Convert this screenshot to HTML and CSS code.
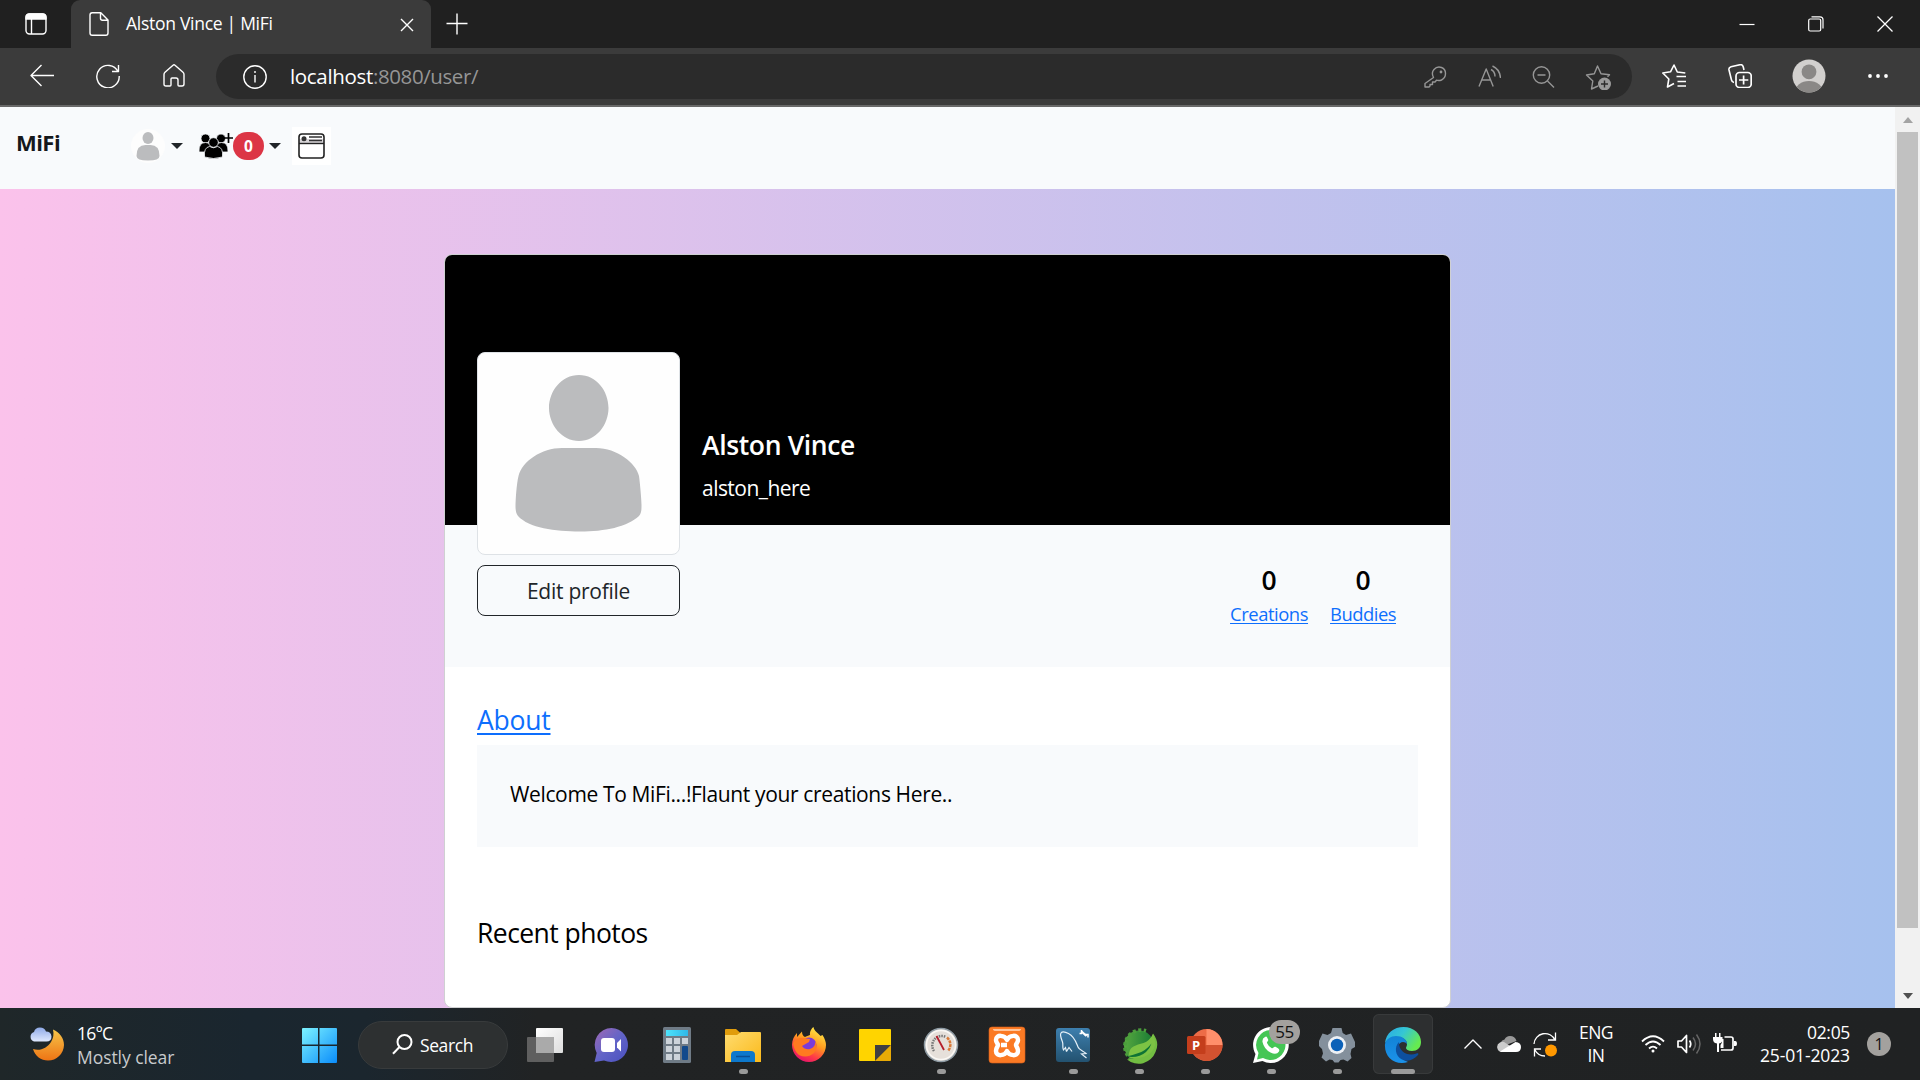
FILE: index.html
```html
<!DOCTYPE html>
<html lang="en">
<head>
<meta charset="utf-8">
<title>Alston Vince | MiFi</title>
<link rel="stylesheet" href="styles.css">
</head>
<body>
<div class="screen">

<header class="titlebar">
  <svg class="tab-actions line" width="24" height="24" viewBox="0 0 24 24"><rect x="2" y="2" width="20" height="20" rx="3.5"/><path d="M2 7V5.500Q2 2 5.500 2h13Q22 2 22 5.500V7z" fill="#fff"/><path d="M7.500 7v15"/></svg>
  <div class="tab">
    <svg class="line" width="20" height="24" viewBox="0 0 20 24"><path d="M1 3Q1 .8 3.200.8h8.600L19 8v13q0 2.200-2.200 2.200H3.200Q1 23.200 1 21zM11.500 1v5.200q0 2 2 2H19" stroke-width="1.400"/></svg>
    <span class="tab-title">Alston Vince | MiFi</span>
    <svg class="line tab-close" width="14" height="14" viewBox="0 0 14 14"><path d="M1 1l12 12M13 1L1 13"/></svg>
  </div>
  <svg class="line new-tab" width="22" height="22" viewBox="0 0 22 22"><path d="M11 .5v21M.5 10.500h21"/></svg>
  <div class="window-controls">
    <svg class="line" width="16" height="16" viewBox="0 0 16 16"><path d="M.5 8.500h15" stroke-width="1.200"/></svg>
    <svg class="line" width="16" height="16" viewBox="0 0 16 16"><rect x=".7" y="3" width="12" height="12" rx="1.500" stroke-width="1.200"/><path d="M3.500.8H12Q15 .8 15 3.800V12.500" stroke-width="1.200"/></svg>
    <svg class="line" width="16" height="16" viewBox="0 0 16 16"><path d="M.5.500l15 15M15.500.500l-15 15" stroke-width="1.300"/></svg>
  </div>
</header>

<nav class="toolbar">
  <svg class="line" width="24" height="24" viewBox="0 0 24 24"><path d="M24 11.500H1M11.500 1L1 11.500 11.500 22"/></svg>
  <svg class="line" width="24" height="24" viewBox="0 0 24 24"><path d="M22 7.500A11.200 11.200 0 1 0 23.200 12M22.500 1v6.500H16"/></svg>
  <svg class="line" width="24" height="24" viewBox="0 0 24 24"><path d="M2 10.500q0-1.300 1-2.200L11 1.200q1-.8 2 0l8 7.100q1 .9 1 2.200V20q0 2-2 2h-3q-1 0-1-1v-5q0-2-2-2h-4q-1 0-1 1v6q0 1-1 1H4q-2 0-2-2z"/></svg>
  <div class="address">
    <svg class="line" width="24" height="24" viewBox="0 0 24 24"><circle cx="12" cy="12" r="11.200"/><path d="M12 10v7.500M12 6v2"/></svg>
    <span class="url"><span class="url-host">localhost</span>:8080/user/</span>
    <div class="address-icons">
      <svg class="line dim" width="24" height="24" viewBox="0 0 24 24"><path d="M10.500 12.500q-2.500-4.500.5-8 3-3.500 7.500-2 4 1.500 4 6t-4 6.500q-2.500 1-5 .2L12 17H9.500v2.500H7V21l-1 1H2v-3.500z"/><circle cx="18" cy="7" r=".7"/></svg>
      <svg class="line dim" width="24" height="24" viewBox="0 0 24 24"><path d="M2 21.500L9.200 4l7 17.500M4.800 15h9M14 4.500q4 2 4 7M15.500 1q7.500 3.500 8 12"/></svg>
      <svg class="line dim" width="24" height="24" viewBox="0 0 24 24"><circle cx="10.500" cy="10" r="8.200"/><path d="M16.500 16l6.500 6.500M6.500 10h8"/></svg>
      <svg class="line dim" width="27" height="26" viewBox="0 0 27 26"><path d="M13 22l-6.500 3 1.300-8L1.500 11l7.800-1.200L12.500 2l3.500 7.800 8.500 1-2 2"/><circle cx="19.500" cy="20" r="6.500" fill="#9a9a9a" stroke="none"/><path d="M19.500 16.500v7M16 20h7" stroke="#2b2b2b"/></svg>
    </div>
  </div>
  <div class="toolbar-icons">
    <svg class="line" width="24" height="24" viewBox="0 0 24 24"><path d="M12 19.500L5.500 23l1.300-8L.8 9l7.700-1.200L12 1l3.300 7 8 1M14.500 12.500H24M15.500 17.500H24M15.500 22H24" stroke-width="1.600"/></svg>
    <svg class="line collections" width="24" height="24" viewBox="0 0 24 24"><path d="M6 18.500q-2-.3-2.500-2.500L1 6q-.5-2.600 2-3.300l9-2q2.500-.5 3.200 2l.8 3.300" stroke-width="1.600"/><rect x="8" y="8.500" width="15.200" height="15" rx="3.500" stroke-width="1.700"/><path d="M15.600 11.500v9M11 16h9.300" stroke-width="1.700"/></svg>
    <svg width="34" height="34" viewBox="0 0 34 34"><defs><clipPath id="pc"><circle cx="17" cy="17" r="16.500"/></clipPath></defs><g clip-path="url(#pc)"><path d="M0 0h34v34H0z" fill="#d2d0ce"/><circle cx="17" cy="12.800" r="7.400" fill="#8a8886"/><ellipse cx="17" cy="33" rx="14" ry="11" fill="#8a8886"/></g></svg>
    <svg width="24" height="24" viewBox="0 0 24 24" fill="#fff"><circle cx="4" cy="12" r="1.900"/><circle cx="12" cy="12" r="1.900"/><circle cx="20" cy="12" r="1.900"/></svg>
  </div>
</nav>

<div class="viewport">
  <div class="page">
    <div class="navbar">
      <span class="brand">MiFi</span>
      <div class="nav-items">
        <svg class="nav-avatar" width="34" height="34" viewBox="0 0 34 34"><circle cx="17" cy="17" r="17" fill="#fdfdfd"/><ellipse cx="17" cy="9" rx="5.500" ry="6" fill="#bbbcbe"/><path d="M5.500 27q0-11 9-11h5q9 0 9 11 0 4.500-11.500 4.500T5.500 27z" fill="#bbbcbe"/></svg>
        <i class="caret"></i>
        <svg class="nav-group" width="34" height="28" viewBox="0 0 34 28"><g stroke="#f8fafc" stroke-width=".8"><circle cx="6.500" cy="6.500" r="4.500"/><circle cx="22" cy="6.500" r="4.500"/><path d="M0 20q-.5-9.500 6.500-9.500T13 20zM29 20q.5-9.500-6.500-9.500T15 20z"/><circle cx="14.500" cy="10.500" r="4.800"/><path d="M5.500 25q-1-9.500 5-10.500 4 2.500 8 0 6 1 5 10.500-9 3-18 0z"/></g><path d="M29.500 1v10M25 6h9.500" stroke="#000" stroke-width="1.700"/></svg>
        <span class="badge">0</span>
        <i class="caret caret-second"></i>
        <svg class="nav-feed" width="39" height="38" viewBox="0 0 39 38"><path d="M0 0h39v38H0z" fill="#fff"/><path d="M7 12h25v5H7z" fill="#d8d5d8"/><rect x="7" y="7" width="25" height="24" rx="3" fill="none" stroke="#222" stroke-width="1.600"/><path d="M7 16.500h25" stroke="#222" stroke-width="1.400"/><path d="M17 10h13M17 13.500h13" stroke="#333" stroke-width="1.300"/><circle cx="12" cy="11.800" r="2.500" fill="#333"/></svg>
      </div>
    </div>

    <main class="card">
      <section class="cover">
        <div class="identity">
          <div class="photo">
            <svg width="201" height="201" viewBox="0 0 201 201" fill="#bbbcbe"><path d="M101 22c17.500 0 29.500 16 29.500 33S118 88 101 88 71 72 71 55s12.500-33 30-33zM84 95h34c21 0 40 15 43 28 1 7 2.500 24 2.500 29 0 5 0 8-2.500 11-12 11-34 15.500-59 15.500S51 175 40 163c-2-2.500-2.500-6-2.500-10 0-6 1-22 3-30 4-15 23-28 43.500-28z"/></svg>
          </div>
          <button class="edit">Edit profile</button>
        </div>
        <div class="names">
          <h1 class="full-name">Alston Vince</h1>
          <p class="handle">alston_here</p>
        </div>
      </section>
      <section class="stats">
        <div class="stat"><span class="count">0</span><a class="stat-link creations">Creations</a></div>
        <div class="stat"><span class="count">0</span><a class="stat-link buddies">Buddies</a></div>
      </section>
      <section class="details">
        <a class="about">About</a>
        <div class="bio">Welcome To MiFi...!Flaunt your creations Here..</div>
        <p class="recent">Recent photos</p>
      </section>
    </main>
  </div>
  <div class="scrollbar"><i class="arrow arrow-up"></i><i class="thumb"></i><i class="arrow arrow-down"></i></div>
</div>

<footer class="taskbar">
  <div class="weather">
    <svg width="36" height="36" viewBox="0 0 36 36"><defs><linearGradient id="moon" x2="0" y2="1"><stop stop-color="#f6c64a"/><stop offset="1" stop-color="#ee7414"/></linearGradient><linearGradient id="cl" x2="0" y2="1"><stop stop-color="#8faae8"/><stop offset="1" stop-color="#dfe9ff"/></linearGradient></defs><path d="M24 3.500c7 3 11 9 11 15.500A16 16 0 0 1 19 34.500C12 34.500 6 30 4 23c7 2.500 14-1 18-7 2.500-4 3-8 2-12.500z" fill="url(#moon)"/><path d="M5 15.500a5 5 0 0 1 0-9.500q1-4.300 6-4.500 4.500 0 6 4 5 0 5.500 5 0 5-5 5z" fill="url(#cl)"/></svg>
    <div class="weather-text"><span class="temp">16°C</span><span class="sky">Mostly clear</span></div>
  </div>

  <div class="apps">
    <div class="app">
      <svg width="40" height="40" viewBox="0 0 40 40"><defs><linearGradient id="win" x2="1" y2="1" gradientUnits="objectBoundingBox"><stop stop-color="#7df3ff"/><stop offset="1" stop-color="#0a8cfb"/></linearGradient></defs><path d="M4 3h15v16.500H3V4q0-1 1-1zM20.500 3H37q1 0 1 1v15.500H20.500zM3 21h16v17H4q-1 0-1-1zM20.500 21H38v16q0 1-1 1H20.500z" fill="url(#win)"/></svg>
    </div>
    <div class="search">
      <svg width="21" height="21" viewBox="0 0 21 21" fill="none" stroke="#fff" stroke-width="2"><circle cx="12.500" cy="8" r="7"/><path d="M7.500 13L1 19.800"/></svg>
      <span>Search</span>
    </div>

    <div class="app">
      <svg width="40" height="40" viewBox="0 0 40 40"><defs><linearGradient id="tv" x2="1" y2="1"><stop stop-color="#fff"/><stop offset="1" stop-color="#ddd"/></linearGradient></defs><rect x="11" y="3" width="27" height="25" rx="1" fill="url(#tv)"/><rect x="2" y="12" width="27" height="25" rx="1" fill="#5f5f5f"/><path d="M11 12h18v16H11z" fill="#aaa"/></svg>
    </div>
    <div class="app">
      <svg width="40" height="40" viewBox="0 0 40 40"><defs><linearGradient id="chat" x2="1" y2="1"><stop stop-color="#a069b4"/><stop offset=".5" stop-color="#6264c7"/><stop offset="1" stop-color="#4a50c0"/></linearGradient></defs><path d="M20.500 3A17 17 0 1 1 13 35.500L3.500 37l2.200-9A17 17 0 0 1 20.500 3z" fill="url(#chat)"/><rect x="10" y="13" width="14" height="14" rx="3" fill="#fff"/><path d="M26 18l4-4v12.500l-4-4z" fill="#fff"/></svg>
    </div>
    <div class="app">
      <svg width="40" height="40" viewBox="0 0 40 40"><defs><linearGradient id="disp" x2="1"><stop stop-color="#4de3fb"/><stop offset="1" stop-color="#30b8e8"/></linearGradient></defs><rect x="6" y="2" width="28" height="36" rx="1.500" fill="#6f7b86"/><path d="M9 5h22v6H9z" fill="url(#disp)"/><path d="M9 13h6v6H9zM17 13h6v6h-6zM25 13h6v6h-6zM9 21h6v6H9zM17 21h6v6h-6zM9 29h6v6H9zM17 29h6v6h-6z" fill="#ccd3da"/><rect x="25" y="21" width="6" height="14" rx="1" fill="#124a8c"/></svg>
    </div>
    <div class="app running">
      <svg width="40" height="40" viewBox="0 0 40 40"><defs><linearGradient id="fold" x2="1" y2="1"><stop stop-color="#ffdc70"/><stop offset="1" stop-color="#fbb91a"/></linearGradient></defs><path d="M2 5q0-1 1-1h10l4.500 4V14H2z" fill="#e09c0c"/><path d="M2 10h12l4-3h19q1 0 1 1v29H2z" fill="url(#fold)"/><path d="M8 37v-7q0-4 4-4h16q4 0 4 4v7z" fill="#0d78cc"/><path d="M13 31.500h14" stroke="#0a4f94" stroke-width="1.500"/></svg>
    </div>
    <div class="app">
      <svg width="40" height="40" viewBox="0 0 40 40"><defs><linearGradient id="ff" x1=".8" y1="0" x2=".3" y2="1"><stop stop-color="#fff04a"/><stop offset=".45" stop-color="#ff9a1f"/><stop offset=".75" stop-color="#ff3b47"/><stop offset="1" stop-color="#e4116d"/></linearGradient></defs><path d="M24.500 2c.5 4 5 6.500 7 9l2-1c2.500 4 3.500 7 3.500 10A17 17 0 0 1 3 20c0-5 2-9 5-12v4l5-5.500c0 3 1 4.500 3 5.500 2-1.500 4.500-1.500 5-2-.5-4 2-7 3.500-8z" fill="url(#ff)"/><circle cx="20" cy="20" r="7.500" fill="#7b3bd8"/><path d="M4 18q4-6 12-5 3 1 5 1l-1 3-7 4q3 4 8 3 6-2 5-8 4 7-1 12-7 6-15 2-5-4-6-12z" fill="#ff7a20"/></svg>
    </div>
    <div class="app">
      <svg width="40" height="40" viewBox="0 0 40 40"><path d="M4 5q0-1 1-1h30q1 0 1 1v15L20 36H5q-1 0-1-1z" fill="#ffd400"/><path d="M20 20h16L20 36z" fill="#3f3f41"/><path d="M36 20v15q0 1-1 1H20z" fill="#e8aa06"/></svg>
    </div>
    <div class="app running">
      <svg width="40" height="40" viewBox="0 0 40 40"><circle cx="20" cy="20" r="16.500" fill="#e6e0da" stroke="#8e9ba4" stroke-width="1.500"/><circle cx="20" cy="20" r="14.500" fill="none" stroke="#faf8f5" stroke-width="1.500"/><path d="M13 26a9.500 9.500 0 0 1 12-14" fill="none" stroke="#777" stroke-width="2.500" stroke-dasharray="1.500 1"/><path d="M26 12.500a9.500 9.500 0 0 1 1 13.500" fill="none" stroke="#d97a38" stroke-width="2.500" stroke-dasharray="3 .8"/><path d="M15.500 11L23 25" stroke="#b51e2c" stroke-width="1.800"/></svg>
    </div>
    <div class="app">
      <svg width="40" height="40" viewBox="0 0 40 40"><rect x="2" y="2" width="36" height="36" rx="3" fill="#fb7a24" stroke="#d8601a" stroke-width=".6"/><path d="M6 4h28q0 2-3 2H9Q6 6 6 4z" fill="#ffc49a"/><path d="M20 15c-2-5-11-6-11 0 0 3 2 3.500 2 5s-2 2.500-2 6c0 6 9 5 11 0 2 5 11 6 11 0 0-3.500-2-4.500-2-6s2-2 2-5c0-6-9-5-11 0zM14 20h6" fill="none" stroke="#fff" stroke-width="4.500" stroke-linejoin="round"/></svg>
    </div>
    <div class="app running">
      <svg width="40" height="40" viewBox="0 0 40 40"><defs><linearGradient id="sql" x2="0" y2="1"><stop stop-color="#3d7fae"/><stop offset="1" stop-color="#235270"/></linearGradient></defs><rect x="3" y="3" width="34" height="34" rx="3" fill="url(#sql)"/><path d="M13.500 26.500l-1-4-2 2.500c-1.500-3 0-5-1-8S6.500 10 8 8s4.500-1 7.500.5c6 3 7.500 8.500 9.500 13.500 1 3 5.500 4 8 6.500l-4.500.5 5 4M13.500 26.500l2.500-4 3 4" fill="none" stroke="#e6f1f8" stroke-width="1.200"/><path d="M28.500 6.500l5 4.500" stroke="#fff" stroke-width="2.300"/><path d="M28.500 5v3.500H26.500M35 12.500v-3h-3.500" fill="none" stroke="#fff" stroke-width="1.500"/></svg>
    </div>
    <div class="app running">
      <svg width="40" height="40" viewBox="0 0 40 40"><defs><linearGradient id="sp" x2="1" y2="0"><stop stop-color="#57a83f"/><stop offset="1" stop-color="#177a34"/></linearGradient></defs><circle cx="20" cy="20.500" r="15" fill="url(#sp)"/><path d="M12.500 34.500A16.300 16.300 0 0 1 27 5.800" fill="none" stroke="#4b9d3c" stroke-width="3.600" stroke-dasharray="3 2.400"/><path d="M34 8.500q7 9 2.500 18.500A18 18 0 0 1 8 34.500Q29 32 32 18q.5-5 2-9.500z" fill="#72bd42"/><path d="M34 9q5 12-2 18.500-6 5-14 5.500-5 1-8.500-1 0-8 5-10.500 4-2.500 10-3.500 6-2 9.500-9z" fill="#7cc344"/><path d="M7.500 31.500q12 2 19.500-4.500 4-3.500 5.500-8.500-6 7.500-13 9.500-6 2-12 3.500z" fill="#0e7335"/></svg>
    </div>
    <div class="app running">
      <svg width="40" height="40" viewBox="0 0 40 40"><circle cx="21.500" cy="20" r="16" fill="#ed6c47"/><path d="M21.500 4a16 16 0 0 1 16 16h-16z" fill="#ff8f6b"/><path d="M37.500 20a16 16 0 0 1-31 5.500L21.500 20z" fill="#d35230"/><rect x="2" y="11" width="18.500" height="18" rx="1.500" fill="#c43e1c"/><text x="11" y="24.500" text-anchor="middle" class="ppt-letter">P</text></svg>
    </div>
    <div class="app running">
      <svg width="40" height="40" viewBox="0 0 40 40"><path d="M20 2a18 18 0 1 1-8.500 34L2 38l2.500-9A18 18 0 0 1 20 2z" fill="#fff"/><path d="M20 5a15 15 0 1 1-8 28l-6 1.500L7.500 28A15 15 0 0 1 20 5z" fill="#45c655"/><path d="M14 12q-3 1-2.500 5 1.500 7 8 10.500 6 3 8.500-1 1-2-1-3.200l-2.500-1.500q-1-.5-2 .7t-2 .5q-3-1.500-4.500-5-.3-.7.7-1.700t.3-2l-1-2q-.7-1.300-2-.3z" fill="#fff"/></svg>
      <span class="count-badge">55</span>
    </div>
    <div class="app running">
      <svg width="40" height="40" viewBox="0 0 40 40"><path d="M15.500 3h9l1.200 5 3.300 2 5-1.500L38 17v5l-3.500 2-1 5 1 4-4 3.500-4-2-3 .5-2 2.500h-4l-2-2.500-3-.5-3.500 2-4.500-4 1.500-4-1-4.500L2 21v-5l3.500-7.500 5 1.500 3.500-2z" fill="#84909c"/><circle cx="20" cy="20" r="9" fill="#eef1f5"/><circle cx="20" cy="20" r="6.200" fill="#0b61b8"/></svg>
    </div>
    <div class="app active">
      <svg width="40" height="40" viewBox="0 0 40 40"><defs><linearGradient id="eg" x2="1" y2=".5"><stop stop-color="#27a8e8"/><stop offset=".5" stop-color="#35c6d4"/><stop offset="1" stop-color="#66ea50"/></linearGradient><linearGradient id="eb" x2="0" y2="1"><stop stop-color="#1283d6"/><stop offset="1" stop-color="#1b92ea"/></linearGradient></defs><path d="M2 18C3 8 11 2 20.500 2 31 2 38 9 38 17c0 6-4 9-9 9-4 0-6-1.500-6-3 0-1 1-1.500 1-4 0-4-4-7-10-7S4 15 2 18z" fill="url(#eg)"/><path d="M2 19c1-5 6-8 11-8 6 0 11 3.500 11 8-2-3-8-3-9 3-1 7 4 13 10 15-13 4-24-5-23-18z" fill="url(#eb)"/><path d="M16 17c-5 5-4 14 3 17.500 6 3 12 0 16-4.500 1-1.200 0-2-1.500-1.500-8 3-18-1-17.500-11.500z" fill="#0d4f9e"/></svg>
    </div>
  </div>

  <div class="tray">
    <svg class="line" width="18" height="12" viewBox="0 0 18 12"><path d="M.5 10.500L9 2l8.500 8.500"/></svg>
    <svg class="tray-cloud" width="24" height="18" viewBox="0 0 24 18"><path d="M4 12.500Q2 6 7.500 4.500 9 1 13 1q5 0 6.500 5l-8 3z" fill="#999"/><path d="M5 17a5 5 0 0 1-2-9.500q3-1.500 5.500.5L20 15z" fill="#ccc"/><path d="M3 16.500L18.500 7q5.500.5 5.500 5 0 5-5 5H5q-1 0-2-.5z" fill="#fff"/></svg>
    <svg class="tray-sync" width="24" height="25" viewBox="0 0 24 25" fill="none" stroke="#fff" stroke-width="1.300"><path d="M1 12A11 11 0 0 1 22 8M22.500.500V8H15M12 24Q5 24 2 18M1.500 24.500V17H8"/><circle cx="18" cy="18.500" r="6" fill="#ff9800" stroke="none"/></svg>
    <div class="lang"><span>ENG</span><span>IN</span></div>
    <svg class="line tray-wifi" width="24" height="18" viewBox="0 0 24 18"><path d="M1 6.500Q12-4 23 6.500M4.500 10q7.500-7 15 0M8 13.500q4-3.700 8 0" stroke-width="1.800"/><circle cx="12" cy="16" r="1.500" fill="#fff" stroke="none"/></svg>
    <svg class="line tray-vol" width="24" height="20" viewBox="0 0 24 20"><path d="M1 7h3.500l5-5.500v17L4.500 13H1z" stroke-width="1.700"/><path d="M12.500 6.500q2.500 3.500 0 7" stroke-width="1.700"/><path d="M16 3.500q5 6.500 0 13M19.500.500q7 9.500 0 19" stroke="#666" stroke-width="1.500"/></svg>
    <svg class="tray-battery" width="24" height="20" viewBox="0 0 24 20"><path d="M11.500 4H18q2 0 2 2v9q0 2-2 2H8" fill="none" stroke="#fff" stroke-width="1.700"/><path d="M21 8h1.500q1.500 0 1.500 2.500T22.500 13H21z" fill="#fff"/><path d="M0 4h9.500v2q0 4-3.500 4.500V19H4v-8.500Q0 10 0 6zM2 0h1.500v5H2zM6 0h1.500v5H6zM9 9.500V6h1.500v9H7.500V12z" fill="#fff"/></svg>
    <div class="clock"><span class="time">02:05</span><span class="date">25-01-2023</span></div>
    <span class="notice">1</span>
  </div>
</footer>
</div>
</body>
</html>
```
FILE: styles.css
```css
* { box-sizing: border-box; }
body { margin: 0; font-family: "Open Sans", "Noto Sans", sans-serif; color: #000; }
svg { display: block; flex: none; }
h1, p { margin: 0; font-weight: 400; }
.screen { width: 1920px; height: 1080px; display: flex; flex-direction: column; overflow: hidden; }
.line { fill: none; stroke: #fff; stroke-width: 1.4; stroke-linejoin: round; }
.dim { stroke: #969696; }

/* window title bar */
.titlebar { height: 48px; flex: none; display: flex; align-items: center; background: #202020; }
.tab-actions { margin-left: 24px; }
.tab { width: 360px; height: 48px; margin-left: 23px; padding: 0 17px 0 18px; display: flex; align-items: center; background: #3b3b3b; border-radius: 9px 9px 0 0; }
.tab-title { margin-left: 17px; padding-bottom: 2px; font-size: 17.5px; letter-spacing: -.28px; color: #fff; white-space: nowrap; }
.tab-close { margin: 2px 0 0 auto; }
.new-tab { margin-left: 15px; }
.window-controls { margin: 0 27px 0 auto; display: flex; gap: 53px; }

/* browser toolbar */
.toolbar { height: 59px; flex: none; display: flex; align-items: center; gap: 42px; padding: 0 30px; background: #3b3b3b; border-bottom: 2px solid #686868; }
.toolbar > .line { margin-bottom: 1px; }
.address { width: 1416px; height: 45px; margin-left: -12px; padding: 0 20px 0 27px; display: flex; align-items: center; background: #2b2b2b; border-radius: 23px; }
.url { margin-left: 23px; padding-bottom: 2px; font-size: 20.5px; letter-spacing: -.41px; color: #969696; }
.url-host { letter-spacing: -.32px; color: #fff; }
.address-icons { margin-left: auto; display: flex; align-items: center; gap: 30px; }
.toolbar-icons { margin-left: -12px; padding-bottom: 1px; display: flex; align-items: center; gap: 40px; }
.collections { margin-left: 2px; }

/* page */
.viewport { height: 901px; flex: none; display: flex; }
.page { width: 1895px; display: flex; flex-direction: column; align-items: center; background: linear-gradient(to right, #fbc2eb, #a6c1ee); }
.navbar { width: 100%; height: 82px; flex: none; display: flex; padding: 20px 0 0 16px; background: #f8fafc; }
.brand { width: 115px; line-height: 30px; font-size: 22px; font-weight: 700; letter-spacing: -.55px; color: #15181b; }
.nav-items { display: flex; align-items: center; height: 38px; }
.caret { border: 6px solid transparent; border-top: 6.5px solid #212529; border-bottom: 0; margin-left: 6px; }
.nav-group { margin-left: 16px; }
.badge { width: 31px; height: 28px; border-radius: 14px; background: #dc3545; color: #fff; font-size: 15.5px; font-weight: 700; line-height: 28px; text-align: center; }
.caret-second { margin-left: 5px; }
.nav-feed { margin-left: 11px; }

.card { width: 1007px; height: 754px; flex: none; margin-top: 65px; border: 1px solid #cfd0d2; border-radius: 8px; background: #fff; overflow: hidden; }
.cover { height: 270px; display: flex; background: #000; padding-left: 32px; }
.identity { width: 203px; margin-top: 97px; flex: none; }
.photo { width: 203px; height: 203px; border: 1px solid #dee2e6; border-radius: 8px; background: #fefefe; }
.edit { display: block; width: 203px; height: 51px; margin-top: 10px; border: 1px solid #212529; border-radius: 8px; background: #f8fafc; font: 21px "Open Sans", sans-serif; letter-spacing: -.27px; color: #212529; padding: 0; }
.identity > * { position: relative; }
.names { margin: 173px 0 0 22px; color: #fff; }
.full-name { font-size: 26.5px; font-weight: 600; letter-spacing: -.36px; line-height: 34px; }
.handle { margin-top: 10px; font-size: 21px; letter-spacing: -.54px; line-height: 32px; }
.stats { height: 142px; display: flex; justify-content: flex-end; gap: 22px; padding: 38px 54px 0 0; background: #f8fafc; }
.stat { display: flex; flex-direction: column; align-items: center; }
.count { font-size: 26.5px; font-weight: 600; line-height: 34px; }
.stat-link { margin-top: 3px; font-size: 18.4px; line-height: 28px; }
.stat-link, .about { color: #0d6efd; text-decoration: underline; text-underline-offset: 2px; }
.creations { letter-spacing: -.44px; }
.buddies { letter-spacing: -.49px; }
.details { display: flex; flex-direction: column; align-items: flex-start; padding: 33px 32px 0; }
.about { font-size: 26.5px; letter-spacing: -.22px; line-height: 40px; text-underline-offset: 3px; text-decoration-thickness: 2px; }
.bio { width: 100%; height: 102px; margin-top: 5px; padding: 33px 33px 0; background: #f8fafc; font-size: 21px; letter-spacing: -.36px; line-height: 32px; }
.recent { margin-top: 66px; font-size: 26.5px; letter-spacing: -.55px; line-height: 40px; }

.scrollbar { width: 25px; display: flex; flex-direction: column; align-items: center; background: #f1f1f1; }
.thumb { width: 21px; height: 796px; background: #c1c1c1; margin-top: 9px; }
.arrow { border: 5.5px solid transparent; }
.arrow-up { margin-top: 10px; border-bottom: 6px solid #a3a3a3; border-top: 0; }
.arrow-down { margin-top: 65px; border-top: 6px solid #505050; border-bottom: 0; }

/* taskbar */
.taskbar { height: 72px; flex: none; display: flex; align-items: center; background: linear-gradient(to right, #1f2729, #1a262f 13%, #1b262e 19%, #212324 28%, #202223); color: #fff; font-size: 17.5px; }
.weather { width: 256px; height: 72px; margin-left: 29px; padding-top: 1px; display: flex; align-items: center; gap: 12px; }
.weather svg { margin-bottom: 2px; }
.weather-text { display: flex; flex-direction: column; line-height: 24px; }
.temp { letter-spacing: -.8px; }
.sky { letter-spacing: -.06px; color: #c8cbcd; }
.apps { display: flex; align-items: center; margin-left: 1px; }
.app { position: relative; width: 66px; height: 60px; display: flex; align-items: center; justify-content: center; }
.app svg { margin-top: 2px; }
.search { width: 150px; height: 48px; margin: 2px 4px 0 6px; padding: 0 0 0 33px; display: flex; align-items: center; gap: 7px; border: 1px solid #383b3c; border-radius: 24px; background: #2d3031; letter-spacing: -.4px; }
.search svg { margin-bottom: 1px; }
.running::after, .active::after { content: ""; position: absolute; bottom: 0; left: 29px; width: 9px; height: 5px; border-radius: 2.5px; background: #9a9a9a; }
.active { width: 60px; margin-left: 3px; border-radius: 6px; background: #2d2f30; box-shadow: inset 0 0 0 1px #383a3b; }
.active::after { width: 24px; left: 18px; }
.ppt-letter { font: 700 13px "Open Sans", sans-serif; fill: #fff; }
.count-badge { position: absolute; left: 31px; top: 6px; width: 31px; height: 24px; border-radius: 12px; background: #a3a19e; color: #111; font-size: 17px; line-height: 24px; text-align: center; letter-spacing: -.5px; }

.tray { margin: 0 29px 0 auto; display: flex; align-items: center; line-height: 23px; }
.tray-cloud { margin-left: 15px; }
.tray-sync { margin-left: 12px; }
.lang { width: 34px; margin-left: 22px; display: flex; flex-direction: column; align-items: center; letter-spacing: -.54px; }
.tray-wifi { margin-left: 28px; }
.tray-vol { margin-left: 12px; }
.tray-battery { margin: 0 0 3px 12px; }
.clock { width: 90px; margin-left: 23px; display: flex; flex-direction: column; align-items: flex-end; white-space: nowrap; }
.time { letter-spacing: -.33px; }
.date { letter-spacing: -.13px; }
.notice { width: 24px; height: 24px; margin-left: 17px; border-radius: 50%; background: #a3a19e; color: #111; font-size: 16px; line-height: 24px; text-align: center; }
```
